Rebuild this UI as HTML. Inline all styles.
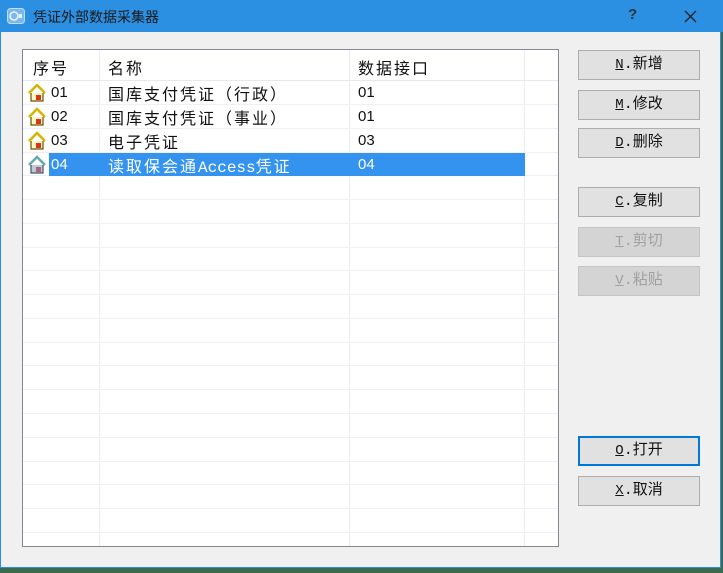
<!DOCTYPE html>
<html><head><meta charset="utf-8"><style>
*{margin:0;padding:0;box-sizing:border-box}
body{width:723px;height:573px;overflow:hidden;background:#3a6a50;font-family:"Liberation Sans","Noto Sans CJK SC",sans-serif;position:relative}
#win{position:absolute;left:0;top:0;width:721px;height:568px;background:#f0f0f0;border:1px solid #2b8ee0;border-top:none}
#title{position:absolute;left:0;top:0;width:723px;height:32px;background:#2b8fe2;color:#1a1a1a;font-size:14px}
.abs{position:absolute}
#list{position:absolute;left:22px;top:49px;width:537px;height:498px;background:#fff;border:1px solid #828790;overflow:hidden}
.h{position:absolute;left:0;width:535px;height:1px;background:#f0f0f0}
.v{position:absolute;top:0;width:1px;height:498px;background:#ebebeb}
.t{position:absolute;font-size:15px;color:#111;white-space:nowrap}
.c{font-size:16px;letter-spacing:2px}
.m{font-family:"Liberation Mono",monospace;font-size:16px;letter-spacing:0}
.btn{position:absolute;left:578px;width:122px;height:30px;background:#e1e1e1;border:1px solid #adadad;font-size:15px;text-align:center;line-height:27px;color:#111;font-family:"Liberation Mono","Noto Sans CJK SC",monospace}
.btn u{font-size:14px}
.dis{color:#a0a0a0;background:#d4d4d4;border-color:#c4c4c4}
</style></head><body>
<div id="win"></div>
<div id="title">
 <svg class="abs" style="left:7px;top:8px" width="18" height="16"><rect x="0.5" y="0.5" width="17" height="15" rx="3" fill="#7ab8ee" stroke="#bfe0fb"/><circle cx="7" cy="8" r="4" fill="none" stroke="#e8f4ff" stroke-width="1.6"/><rect x="12" y="6" width="3" height="4" fill="#e8f4ff"/></svg>
 <span class="abs" style="left:33px;top:7px">凭证外部数据采集器</span>
 <span class="abs" style="left:628px;top:6px;font-size:15px;font-weight:bold;color:#333">?</span>
 <svg class="abs" style="left:684px;top:10px" width="13" height="13"><path d="M1 1L12 12M12 1L1 12" stroke="#222" stroke-width="1.3"/></svg>
</div>
<div id="list">
 <div class="v" style="left:76px"></div><div class="v" style="left:326px"></div><div class="v" style="left:501px"></div>
 <div class="h" style="top:30px;background:#e8e8e8"></div>
 <div class="h" style="top:54px"></div><div class="h" style="top:78px"></div><div class="h" style="top:102px"></div><div class="h" style="top:125px"></div><div class="h" style="top:149px"></div><div class="h" style="top:173px"></div><div class="h" style="top:197px"></div><div class="h" style="top:220px"></div><div class="h" style="top:244px"></div><div class="h" style="top:268px"></div><div class="h" style="top:292px"></div><div class="h" style="top:315px"></div><div class="h" style="top:339px"></div><div class="h" style="top:363px"></div><div class="h" style="top:387px"></div><div class="h" style="top:411px"></div><div class="h" style="top:434px"></div><div class="h" style="top:458px"></div><div class="h" style="top:482px"></div>
 <div class="abs" style="left:26px;top:103px;width:476px;height:23px;background:#3393ee"></div>
 <span class="t c" style="left:10px;top:5px">序号</span><span class="t c" style="left:85px;top:5px">名称</span><span class="t c" style="left:335px;top:5px">数据接口</span>
 <span class="t" style="left:28px;top:34px">01</span><span class="t c" style="left:85px;top:31px">国库支付凭证（行政）</span><span class="t" style="left:335px;top:34px">01</span>
 <span class="t" style="left:28px;top:58px">02</span><span class="t c" style="left:85px;top:55px">国库支付凭证（事业）</span><span class="t" style="left:335px;top:58px">01</span>
 <span class="t" style="left:28px;top:82px">03</span><span class="t c" style="left:85px;top:79px">电子凭证</span><span class="t" style="left:335px;top:82px">03</span>
 <span class="t" style="left:28px;top:106px;color:#fff">04</span><span class="t c" style="left:85px;top:103px;color:#fff">读取保会通<span class="m">Access</span>凭证</span><span class="t" style="left:335px;top:106px;color:#fff">04</span>
 <svg class="abs" style="left:5px;top:34px" width="20" height="90">
  <g id="hs"><path d="M1 9L9 1L17 9" fill="none" stroke="#d6b400" stroke-width="2.5"/><path d="M3 9V17H15V9" fill="#fff8c0" stroke="#6a5200" stroke-width="1.2"/><rect x="8" y="11" width="5" height="5" fill="#e03020"/></g>
  <use href="#hs" y="24"/><use href="#hs" y="48"/>
  <g transform="translate(0,72)"><path d="M1 9L9 1L17 9" fill="none" stroke="#6aa" stroke-width="2.5"/><path d="M3 9V17H15V9" fill="#bcd" stroke="#456" stroke-width="1.2"/><rect x="8" y="11" width="5" height="5" fill="#a67"/></g>
 </svg>
</div>
<div class="btn" style="top:50px"><u>N</u>.新增</div>
<div class="btn" style="top:90px"><u>M</u>.修改</div>
<div class="btn" style="top:128px"><u>D</u>.删除</div>
<div class="btn" style="top:187px"><u>C</u>.复制</div>
<div class="btn dis" style="top:227px"><u>T</u>.剪切</div>
<div class="btn dis" style="top:266px"><u>V</u>.粘贴</div>
<div class="btn" style="top:436px;border:2px solid #0078d7;line-height:25px"><u>O</u>.打开</div>
<div class="btn" style="top:476px"><u>X</u>.取消</div>
</body></html>
